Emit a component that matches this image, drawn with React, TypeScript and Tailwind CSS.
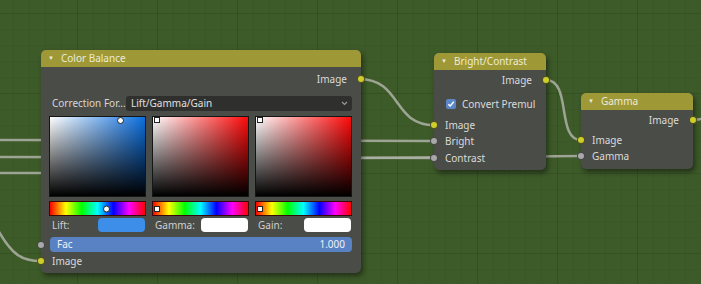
import React from "react"

type Kind = "yellow" | "grey"

// Petit connecteur rond sur le bord d'un nœud
function Socket({ side, kind }: { side: "left" | "right"; kind: Kind }) {
  const pos = side === "left" ? "-left-[4px]" : "-right-[4px]"
  const color = kind === "yellow" ? "bg-[#cdcd2c]" : "bg-[#a8a8a8]"
  return (
    <span
      className={`absolute top-1/2 -translate-y-1/2 w-[8px] h-[8px] rounded-full border border-[#1e1e1e]/70 ${pos} ${color}`}
    />
  )
}

function Node({
  title,
  className,
  children,
}: {
  title: string
  className: string
  children: React.ReactNode
}) {
  return (
    <div
      className={`absolute rounded-[5px] bg-[#4a4c48] shadow-[2px_3px_5px_rgba(0,0,0,0.45)] ${className}`}
    >
      <div className="h-[17px] rounded-t-[5px] bg-[#9e9837] flex items-center pl-[7px] text-[10px] text-[#ecebd6]">
        <span className="text-[6px] mr-[7px]">▼</span>
        {title}
      </div>
      {children}
    </div>
  )
}

// Ligne de sortie (texte à droite) ou d'entrée (texte à gauche)
function Row({
  label,
  side,
  kind,
  className = "",
}: {
  label: string
  side: "left" | "right"
  kind: Kind
  className?: string
}) {
  return (
    <div
      className={`relative h-[16px] flex items-center text-[10px] text-[#dadada] ${
        side === "right" ? "justify-end pr-[14px]" : "pl-[11px]"
      } ${className}`}
    >
      {label}
      <Socket side={side} kind={kind} />
    </div>
  )
}

function Wheel({
  square,
  marker,
  hueMarker,
  round,
}: {
  square: string
  marker: string
  hueMarker: string
  round: boolean
}) {
  const dot = round
    ? "w-[7px] h-[7px] rounded-full bg-white border border-[#222]"
    : "w-[6px] h-[6px] bg-white border border-[#222]"
  return (
    <div className="w-[97px] flex flex-col gap-[4px]">
      <div className={`relative h-[81px] border border-[#151515] ${square}`}>
        <span className={`absolute top-[0px] ${marker} ${dot}`} />
      </div>
      <div className="relative h-[15px] border border-[#3a0808] bg-[linear-gradient(to_right,#ff0000,#ffff00,#00ff00,#00ffff,#0000ff,#ff00ff,#ff0000)]">
        <span className={`absolute top-1/2 -translate-y-1/2 ${hueMarker} ${dot}`} />
      </div>
    </div>
  )
}

function Swatch({ label, color }: { label: string; color: string }) {
  return (
    <div className="w-[97px] h-[14px] flex items-center justify-between pl-[3px] pr-[1px] text-[10px] text-[#cfcfcf]">
      {label}
      <span className={`w-[47px] h-[14px] rounded-[4px] ${color}`} />
    </div>
  )
}

export default function App() {
  return (
    <div className="relative w-[701px] h-[284px] overflow-hidden font-['Noto_Sans',sans-serif] bg-[#3d5a29] bg-[linear-gradient(rgba(0,0,0,0.04)_1px,transparent_1px),linear-gradient(90deg,rgba(0,0,0,0.04)_1px,transparent_1px),linear-gradient(rgba(0,0,0,0.07)_1px,transparent_1px),linear-gradient(90deg,rgba(0,0,0,0.1)_1px,transparent_1px)] bg-[size:16px_16px,16px_16px,80px_80px,80px_80px] bg-[position:13px_13px,13px_13px,77px_93px,77px_93px]">
      {/* Liens entre les nœuds */}
      <svg className="absolute inset-0" width={701} height={284}>
        <g fill="none" stroke="#aeb2a6" strokeOpacity={0.85} strokeWidth={2.5}>
          <path d="M0,140 L434,141" />
          <path d="M0,157 L434,158" />
          <path d="M0,173 L200,173" />
          <path d="M361,158 L581,156" />
          <path d="M359,79 C402,79 392,125 434,125" />
          <path d="M546,80 C572,80 556,140 581,140" />
          <path d="M693,120 C700,120 703,118 712,117" />
          <path d="M-2,230 C12,255 22,261 41,261" />
        </g>
      </svg>

      {/* Nœud Color Balance */}
      <Node title="Color Balance" className="left-[41px] top-[50px] w-[320px] h-[223px]">
        <Row label="Image" side="right" kind="yellow" className="mt-[4px]" />
        <div className="mt-[9px] h-[15px] flex items-center pl-[11px] pr-[9px] text-[10px] text-[#d6d6d6]">
          <span className="w-[74px]">Correction For...</span>
          <div className="flex-1 h-[15px] rounded-[3px] bg-[#2f302d] flex items-center justify-between pl-[5px] pr-[4px] text-[#e0e0e0]">
            Lift/Gamma/Gain
            <svg width="7" height="5" viewBox="0 0 7 5">
              <path d="M1,1 L3.5,3.5 L6,1" fill="none" stroke="#9a9a9a" strokeWidth="1.2" />
            </svg>
          </div>
        </div>
        <div className="mt-[5px] px-[8px] flex gap-[6px]">
          <Wheel
            square="bg-[linear-gradient(to_top,#000,rgba(0,0,0,0)),linear-gradient(to_right,#fff,#0b6fe0)]"
            marker="left-[67px]"
            hueMarker="left-[53px]"
            round
          />
          <Wheel
            square="bg-[linear-gradient(to_top,#000,rgba(0,0,0,0)),linear-gradient(to_right,#fff,#ff0a0a)]"
            marker="left-[1px]"
            hueMarker="left-[1px]"
            round={false}
          />
          <Wheel
            square="bg-[linear-gradient(to_top,#000,rgba(0,0,0,0)),linear-gradient(to_right,#fff,#ff0a0a)]"
            marker="left-[1px]"
            hueMarker="left-[1px]"
            round={false}
          />
        </div>
        <div className="mt-[2px] px-[8px] flex gap-[6px]">
          <Swatch label="Lift:" color="bg-[#3d8ee8]" />
          <Swatch label="Gamma:" color="bg-white" />
          <Swatch label="Gain:" color="bg-white" />
        </div>
        <div className="relative mt-[5px] ml-[9px] mr-[9px] h-[15px] rounded-[4px] bg-[#5882c3] flex items-center justify-between px-[7px] text-[10px] text-[#eef2f8]">
          <span>Fac</span>
          <span>1.000</span>
          <span className="absolute -left-[13px] top-1/2 -translate-y-1/2 w-[8px] h-[8px] rounded-full border border-[#1e1e1e]/70 bg-[#a8a8a8]" />
        </div>
        <Row label="Image" side="left" kind="yellow" className="mt-[1px]" />
      </Node>

      {/* Nœud Bright/Contrast */}
      <Node title="Bright/Contrast" className="left-[434px] top-[53px] w-[112px] h-[117px]">
        <Row label="Image" side="right" kind="yellow" className="mt-[2px]" />
        <div className="mt-[8px] h-[16px] flex items-center pl-[12px] text-[10px] text-[#dadada]">
          <span className="w-[10px] h-[10px] rounded-[2px] bg-[#5b86c8] flex items-center justify-center mr-[6px]">
            <svg width="8" height="8" viewBox="0 0 8 8">
              <path d="M1.3,4.2 L3.2,6 L6.8,1.8" fill="none" stroke="#fff" strokeWidth="1.4" />
            </svg>
          </span>
          Convert Premul
        </div>
        <Row label="Image" side="left" kind="yellow" className="mt-[5px]" />
        <Row label="Bright" side="left" kind="grey" />
        <Row label="Contrast" side="left" kind="grey" className="mt-[1px]" />
      </Node>

      {/* Nœud Gamma */}
      <Node title="Gamma" className="left-[581px] top-[93px] w-[112px] h-[76px]">
        <Row label="Image" side="right" kind="yellow" className="mt-[2px]" />
        <Row label="Image" side="left" kind="yellow" className="mt-[4px]" />
        <Row label="Gamma" side="left" kind="grey" />
      </Node>
    </div>
  )
}
